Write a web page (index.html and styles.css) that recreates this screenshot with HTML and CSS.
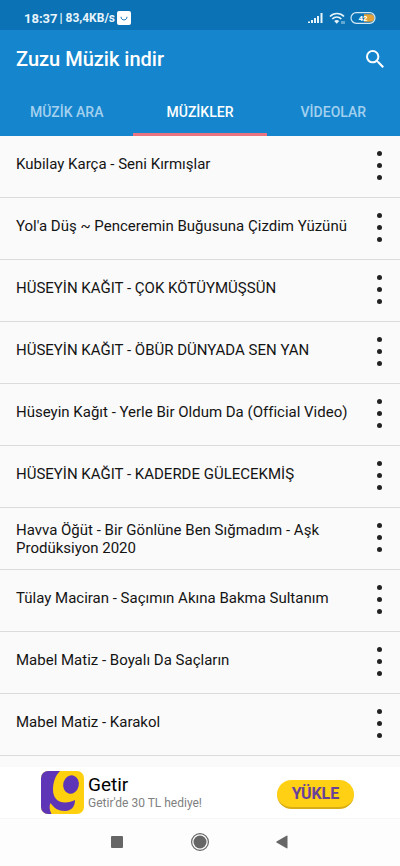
FILE: index.html
```html
<!DOCTYPE html>
<html lang="tr">
<head>
<meta charset="utf-8">
<meta name="viewport" content="width=device-width, initial-scale=1">
<title>Zuzu Müzik indir</title>
<link rel="stylesheet" href="styles.css">
</head>
<body>
<div class="status">
  <div class="status-left">
    <span class="clock">18:37</span><span>| 83,4KB/s</span>
    <svg width="14" height="14" viewBox="0 0 14 14" aria-hidden="true"><rect width="14" height="14" rx="2" fill="#fff"/><path d="M4 6.200c0 3.800 6 3.800 6 0" fill="none" stroke="#1878b4" stroke-width="1" stroke-linecap="round"/></svg>
  </div>
  <div class="status-right">
    <svg width="16" height="12" viewBox="0 0 16 12" aria-hidden="true"><path d="M0 9.500h2V11H0zM3 8h2v3H3zM6 6h2v5H6zM9 4h2v7H9zM12.500 1h2v10h-2z" fill="#e8f4fb"/></svg>
    <svg width="16" height="13" viewBox="0 0 16 13" aria-hidden="true"><path d="M1 4.500c3.800-4 10.200-4 14 0M3.300 7c2.500-2.700 6.500-2.700 9 0" fill="none" stroke="#e8f4fb" stroke-width="1.700"/><path d="M5.200 9c1.400-1.500 3.600-1.500 5 0l-2.500 2.700z" fill="#e8f4fb"/><path d="M13 9v3M15 9v3" stroke="#b9dcf0" stroke-width="1"/></svg>
    <svg width="26" height="12" viewBox="0 0 26 12" role="img" aria-label="42"><path d="M14 2.300h6.500a3.700 3.700 0 0 1 0 7.400H14z" fill="#e2a33c"/><rect x="1" y=".7" width="24" height="10.600" rx="5.300" fill="none" stroke="#d4e9f5" stroke-width="1.200"/><text x="13" y="9" text-anchor="middle" class="battery">42</text></svg>
  </div>
</div>
<header class="appbar">
  <div class="toolbar">
    <h1>Zuzu Müzik indir</h1>
    <button class="search" aria-label="Ara"><svg width="18" height="18" viewBox="3 3 17.500 17.500" aria-hidden="true"><path fill="#fff" d="M15.500 14h-.79l-.28-.27A6.471 6.471 0 0 0 16 9.500 6.500 6.500 0 1 0 9.500 16c1.610 0 3.090-.59 4.230-1.570l.27.28v.79l5 4.990L20.490 19l-4.990-5zm-6 0C7.010 14 5 11.990 5 9.500S7.010 5 9.500 5 14 7.010 14 9.500 11.990 14 9.500 14z"/></svg></button>
  </div>
  <nav class="tabs">
    <button>MÜZİK ARA</button>
    <button class="active">MÜZİKLER</button>
    <button>VİDEOLAR</button>
  </nav>
</header>
<main>
  <ul class="songs">
    <li><span>Kubilay Karça - Seni Kırmışlar</span><button class="more" aria-label="Seçenekler"><i></i><i></i><i></i></button></li>
    <li><span>Yol'a Düş ~ Penceremin Buğusuna Çizdim Yüzünü</span><button class="more" aria-label="Seçenekler"><i></i><i></i><i></i></button></li>
    <li><span>HÜSEYİN KAĞIT - ÇOK KÖTÜYMÜŞSÜN</span><button class="more" aria-label="Seçenekler"><i></i><i></i><i></i></button></li>
    <li><span>HÜSEYİN KAĞIT - ÖBÜR DÜNYADA SEN YAN</span><button class="more" aria-label="Seçenekler"><i></i><i></i><i></i></button></li>
    <li><span>Hüseyin Kağıt - Yerle Bir Oldum Da (Official Video)</span><button class="more" aria-label="Seçenekler"><i></i><i></i><i></i></button></li>
    <li><span>HÜSEYİN KAĞIT - KADERDE GÜLECEKMİŞ</span><button class="more" aria-label="Seçenekler"><i></i><i></i><i></i></button></li>
    <li><span>Havva Öğüt - Bir Gönlüne Ben Sığmadım - Aşk Prodüksiyon 2020</span><button class="more" aria-label="Seçenekler"><i></i><i></i><i></i></button></li>
    <li><span>Tülay Maciran - Saçımın Akına Bakma Sultanım</span><button class="more" aria-label="Seçenekler"><i></i><i></i><i></i></button></li>
    <li><span>Mabel Matiz - Boyalı Da Saçların</span><button class="more" aria-label="Seçenekler"><i></i><i></i><i></i></button></li>
    <li><span>Mabel Matiz - Karakol</span><button class="more" aria-label="Seçenekler"><i></i><i></i><i></i></button></li>
  </ul>
</main>
<aside class="ad">
  <svg width="43" height="43" viewBox="0 0 43 43" aria-hidden="true">
    <defs><clipPath id="tile"><rect width="43" height="43" rx="7"/></clipPath></defs>
    <g clip-path="url(#tile)">
      <rect width="43" height="43" fill="#ffd00d"/>
      <path d="M0 0H19C14 5 12 12 12 19c0 8 5 12.500 12 12.500 4 0 7-1 10-2.500 0 7-4 11-10 11-7 0-11-3-14.500-8C8 35 8.500 39 10.500 43H0z" fill="#5f35b8"/>
      <ellipse cx="30" cy="13.500" rx="7.800" ry="9.300" transform="rotate(14 30 13.500)" fill="#5f35b8"/>
    </g>
  </svg>
  <div class="ad-text"><strong>Getir</strong><small>Getir'de 30 TL hediye!</small></div>
  <button class="install">YÜKLE</button>
</aside>
<footer class="sysnav">
  <button aria-label="Son uygulamalar"><svg width="20" height="20" viewBox="0 0 20 20" aria-hidden="true"><rect x="4" y="4" width="12" height="12" rx="1" fill="#666"/></svg></button>
  <button aria-label="Ana ekran"><svg width="20" height="20" viewBox="0 0 20 20" aria-hidden="true"><circle cx="10" cy="10" r="8.400" fill="none" stroke="#666" stroke-width="1.200"/><circle cx="10" cy="10" r="6.500" fill="#666"/></svg></button>
  <button aria-label="Geri"><svg width="20" height="20" viewBox="0 0 20 20" aria-hidden="true"><path d="M3.500 9.500 13.500 3.700q1-.5 1 .6v11.400q0 1.100-1 .6L3.500 10.500q-.7-.5 0-1z" fill="#666"/></svg></button>
</footer>
</body>
</html>
```
FILE: styles.css
```css
* { box-sizing: border-box; }
body {
  margin: 0;
  min-height: 100vh;
  display: flex;
  flex-direction: column;
  background: #fafafa;
  color: #141414;
  font-family: Roboto, "Noto Sans", sans-serif;
}
button {
  border: 0;
  padding: 0;
  background: none;
  font: inherit;
  color: inherit;
}
svg { display: block; }

.status {
  height: 30px;
  padding: 6px 24px 0;
  display: flex;
  align-items: center;
  justify-content: space-between;
  background: #0a72b5;
  color: #e8f4fb;
  font-size: 12px;
  font-weight: 700;
}
.status-left { display: flex; align-items: center; gap: 2px; }
.clock { font-size: 13px; }
.status-right { display: flex; align-items: center; gap: 5px; }
.battery { font-size: 8px; font-weight: 700; fill: #fff; }

.appbar { background: #1586cd; color: #fff; }
.toolbar {
  height: 58px;
  padding: 0 16px;
  display: flex;
  align-items: center;
  justify-content: space-between;
}
h1 { margin: 0; font-size: 20px; font-weight: 500; }
.tabs {
  height: 48px;
  display: grid;
  grid-template-columns: repeat(3, 1fr);
}
.tabs button {
  border-top: 3px solid transparent;
  border-bottom: 3px solid transparent;
  font-size: 14px;
  font-weight: 500;
  color: #a3d0ef;
}
.tabs .active { color: #fff; border-bottom-color: #e9737f; }

main { flex: 1; }
.songs { margin: 0; padding: 0; list-style: none; }
.songs li {
  min-height: 62px;
  padding: 0 16px;
  display: flex;
  align-items: center;
  justify-content: space-between;
  border-bottom: 1px solid #dcdcdc;
  font-size: 15px;
  line-height: 18px;
}
.songs span { max-width: 340px; min-height: 24px; }
.more {
  width: 9px;
  margin-bottom: 3px;
  display: flex;
  flex-direction: column;
  align-items: center;
  gap: 7px;
}
.more i { width: 5px; height: 5px; border-radius: 50%; background: #222; }

.ad {
  min-height: 51px;
  padding: 4px 46px 4px 41px;
  display: flex;
  align-items: center;
  background: #fff;
}
.ad-text {
  flex: 1;
  margin-left: 4px;
  display: flex;
  flex-direction: column;
}
.ad-text strong { font-size: 19px; line-height: 20px; font-weight: 400; color: #000; }
.ad-text small { font-size: 12px; line-height: 16px; color: #808080; }
.install {
  width: 77px;
  height: 29px;
  margin-top: 4px;
  border-radius: 15px;
  border-bottom: 2px solid #d9ae14;
  background: #ffd013;
  color: #69409a;
  font-size: 16px;
  font-weight: 700;
}

.sysnav {
  height: 48px;
  padding-bottom: 2px;
  display: flex;
  align-items: center;
  justify-content: center;
  gap: 63px;
  background: #fdfdfd;
  border-top: 1px solid #f7f7f7;
}
```
